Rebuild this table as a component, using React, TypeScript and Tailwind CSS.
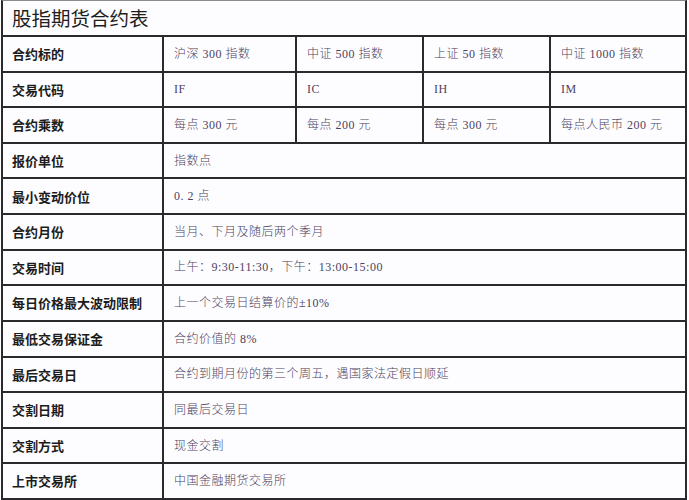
import React from "react";

const label = "font-['Noto_Sans_CJK_SC',sans-serif] font-bold text-[13px] text-[#1c1c1c]";
const val = "font-['Liberation_Serif','Noto_Sans_CJK_SC',serif] font-light text-[12px] tracking-[0.5px] text-[#4d4260]";

type Row = { k: string; v: string[] };
const rows: Row[] = [
  { k: "合约标的", v: ["沪深 300 指数", "中证 500 指数", "上证 50 指数", "中证 1000 指数"] },
  { k: "交易代码", v: ["IF", "IC", "IH", "IM"] },
  { k: "合约乘数", v: ["每点 300 元", "每点 200 元", "每点 300 元", "每点人民币 200 元"] },
  { k: "报价单位", v: ["指数点"] },
  { k: "最小变动价位", v: ["0. 2 点"] },
  { k: "合约月份", v: ["当月、下月及随后两个季月"] },
  { k: "交易时间", v: ["上午：9:30-11:30，下午：13:00-15:00"] },
  { k: "每日价格最大波动限制", v: ["上一个交易日结算价的±10%"] },
  { k: "最低交易保证金", v: ["合约价值的 8%"] },
  { k: "最后交易日", v: ["合约到期月份的第三个周五，遇国家法定假日顺延"] },
  { k: "交割日期", v: ["同最后交易日"] },
  { k: "交割方式", v: ["现金交割"] },
  { k: "上市交易所", v: ["中国金融期货交易所"] },
];

export default function App() {
  return (
    <div className="w-[689px] h-[500px] bg-white overflow-hidden">
      <div className="ml-px w-[686px] h-[500px] border-x-2 border-b-2 border-t border-[#2a2a2e] border-t-[#8a8a90] bg-[#fdfdff] flex flex-col">
        <div className="h-[34px] shrink-0 flex items-center pl-[9px] font-['Noto_Sans_CJK_SC',sans-serif] text-[19.5px] text-[#1e1e1e]">
          股指期货合约表
        </div>
        <div className="flex-1 grid grid-rows-[repeat(13,1fr)]">
          {rows.map((r) => (
            <div key={r.k} className="border-t-2 border-[#2a2a2e] grid grid-cols-[159px_133px_127px_127px_1fr]">
              <div className={`flex items-center pl-[9px] ${label}`}>{r.k}</div>
              {r.v.length === 1 ? (
                <div className={`col-span-4 border-l-2 border-[#2a2a2e] flex items-center pl-[10px] ${val}`}>{r.v[0]}</div>
              ) : (
                r.v.map((x, i) => (
                  <div key={i} className={`border-l-2 border-[#2a2a2e] flex items-center pl-[10px] ${val}`}>{x}</div>
                ))
              )}
            </div>
          ))}
        </div>
      </div>
    </div>
  );
}
